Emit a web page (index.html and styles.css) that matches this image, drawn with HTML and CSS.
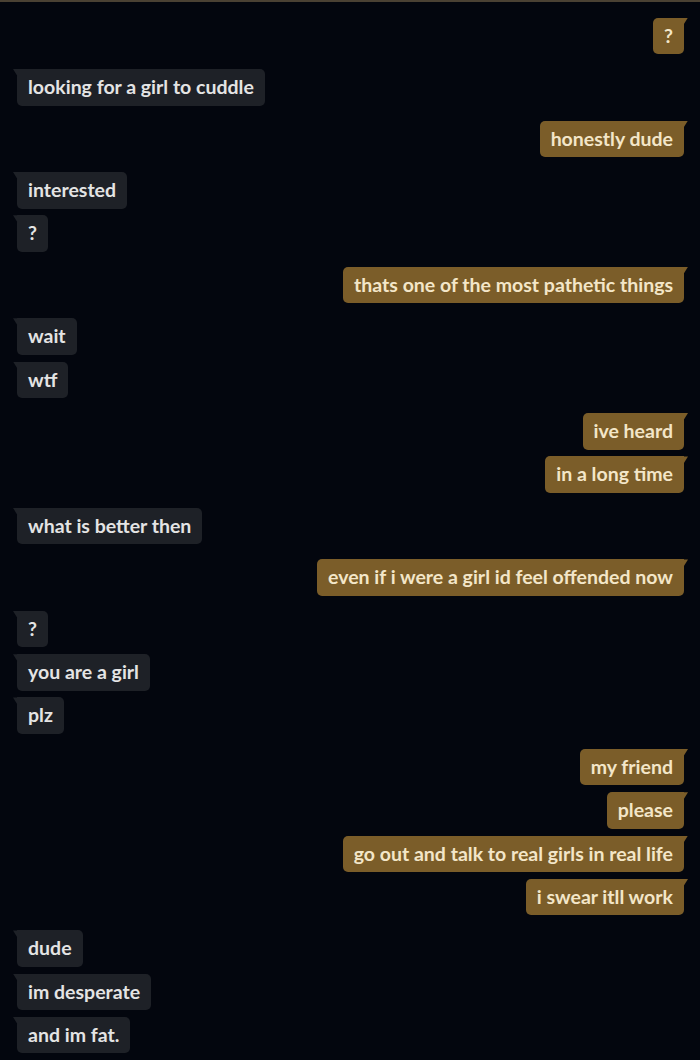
FILE: index.html
```html
<!DOCTYPE html>
<html lang="en">
<head>
<meta charset="utf-8">
<title>Chat</title>
<link rel="stylesheet" href="styles.css">
</head>
<body>
<div class="topline"></div>
<main class="chat">
  <div class="group out"><div class="msg">?</div></div>
  <div class="group in"><div class="msg">looking for a girl to cuddle</div></div>
  <div class="group out"><div class="msg">honestly dude</div></div>
  <div class="group in"><div class="msg">interested</div><div class="msg">?</div></div>
  <div class="group out"><div class="msg">thats one of the most pathetic things</div></div>
  <div class="group in"><div class="msg">wait</div><div class="msg">wtf</div></div>
  <div class="group out"><div class="msg">ive heard</div><div class="msg">in a long time</div></div>
  <div class="group in"><div class="msg">what is better then</div></div>
  <div class="group out"><div class="msg">even if i were a girl id feel offended now</div></div>
  <div class="group in"><div class="msg">?</div><div class="msg">you are a girl</div><div class="msg">plz</div></div>
  <div class="group out"><div class="msg">my friend</div><div class="msg">please</div><div class="msg">go out and talk to real girls in real life</div><div class="msg">i swear itll work</div></div>
  <div class="group in"><div class="msg">dude</div><div class="msg">im desperate</div><div class="msg">and im fat.</div></div>
</main>
</body>
</html>
```

FILE: styles.css
```css
html, body {
  margin: 0;
  padding: 0;
  background: #03060e;
  height: 100%;
  overflow: hidden;
}
body {
  font-family: Lato, "Liberation Sans", sans-serif;
}
.topline {
  height: 2px;
  background: #4a4133;
}
.chat {
  display: flex;
  flex-direction: column;
  gap: 15px;
  padding: 15.5px 16px 0 17px;
}
.group {
  display: flex;
  flex-direction: column;
  gap: 6.8px;
}
.group.in { align-items: flex-start; }
.group.out { align-items: flex-end; }
.msg {
  position: relative;
  font-size: 19.5px;
  font-weight: 700;
  line-height: 20.5px;
  padding: 8px 11px;
  border-radius: 5px;
}
.in .msg {
  background: #1e2127;
  color: #e4e4e4;
  border-top-left-radius: 0;
}
.out .msg {
  background: #7b5d29;
  color: #f3e6c8;
  border-top-right-radius: 0;
}
.msg::before {
  content: "";
  position: absolute;
  top: 0;
  width: 5px;
  height: 8px;
}
.in .msg::before {
  left: -4px;
  background: #1e2127;
  clip-path: polygon(0 0, 100% 0, 100% 100%);
}
.out .msg::before {
  right: -4px;
  background: #7b5d29;
  clip-path: polygon(0 0, 100% 0, 0 100%);
}
```
